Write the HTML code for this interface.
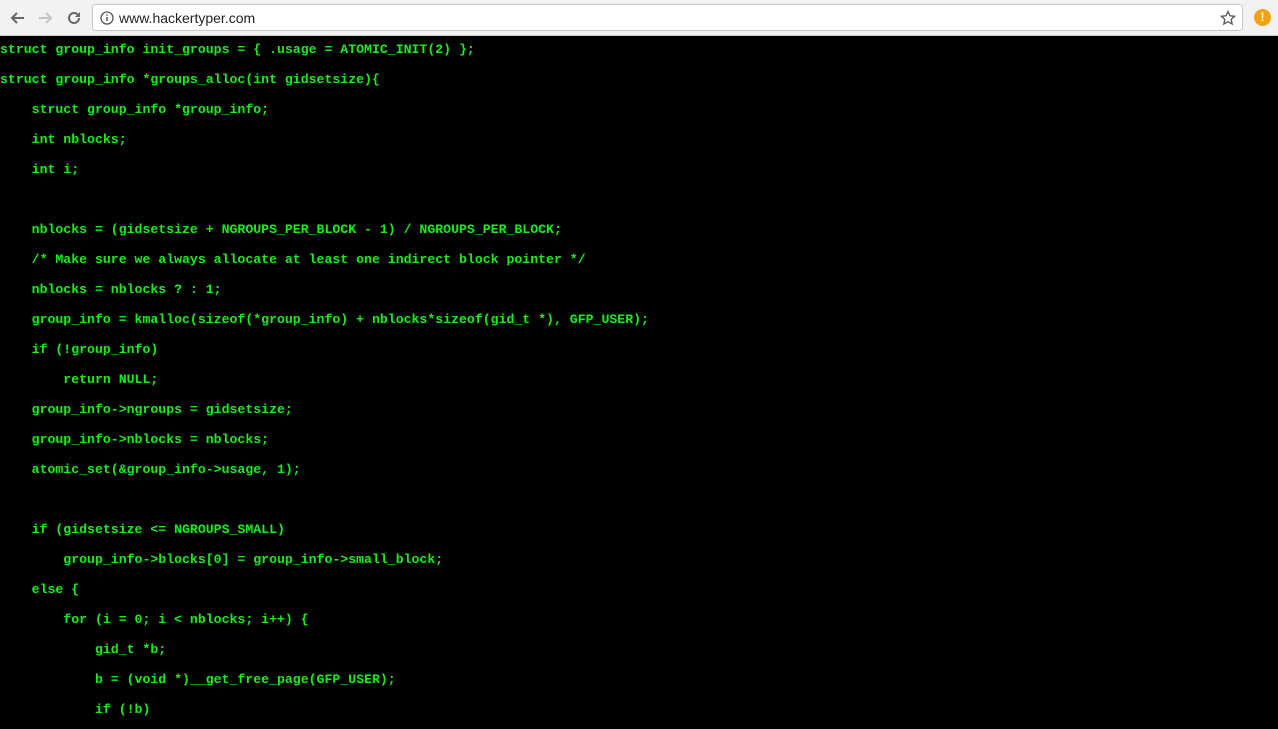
<!DOCTYPE html>
<html><head><style>
body{margin:0;width:1278px;height:729px;overflow:hidden;background:#000;font-family:"Liberation Sans",sans-serif}
.bar{position:absolute;left:0;top:0;width:1278px;height:36px;background:#f2f2f2;border-bottom:1px solid #cfcfcf;box-sizing:border-box}
.url{position:absolute;left:92px;top:4px;width:1151px;height:27px;background:#fff;border:1px solid #c8c8c8;border-radius:3px;box-sizing:border-box}
.url span{position:absolute;left:26px;top:5px;font-size:14px;color:#222}
pre{position:absolute;left:0;top:35px;margin:0;color:#14f014;font-family:"Liberation Mono",monospace;font-weight:bold;font-size:13.2px;line-height:30px;padding-top:0}
</style></head><body>
<div class="bar">
<svg style="position:absolute;left:9px;top:10px" width="16" height="16" viewBox="0 0 16 16"><path d="M15 8H3M8 3L3 8l5 5" stroke="#666" stroke-width="2" fill="none"/></svg>
<svg style="position:absolute;left:38px;top:10px" width="16" height="16" viewBox="0 0 16 16"><path d="M1 8h12M8 3l5 5-5 5" stroke="#c4c4c4" stroke-width="2" fill="none"/></svg>
<svg style="position:absolute;left:66px;top:10px" width="16" height="16" viewBox="0 0 16 16"><path d="M13 8a5 5 0 1 1-1.5-3.6" stroke="#666" stroke-width="2" fill="none"/><path d="M14 2v5h-5z" fill="#666"/></svg>
<div class="url"><svg style="position:absolute;left:7px;top:6px" width="14" height="14" viewBox="0 0 14 14"><circle cx="7" cy="7" r="6" stroke="#555" stroke-width="1.3" fill="none"/><path d="M7 6v4M7 3.5v1.3" stroke="#555" stroke-width="1.5"/></svg><span>www.hackertyper.com</span>
<svg style="position:absolute;right:6px;top:5px" width="16" height="16" viewBox="0 0 16 16"><path d="M8 1.5l2 4.3 4.6.5-3.4 3.1 1 4.6L8 11.7 3.8 14l1-4.6L1.4 6.3 6 5.8z" stroke="#555" stroke-width="1.3" fill="none"/></svg></div>
<div style="position:absolute;left:1254px;top:9px;width:17px;height:17px;border-radius:50%;background:#f2a20c;color:#fff;font-weight:bold;font-size:12px;text-align:center;line-height:17px">!</div>
</div>
<pre>struct group_info init_groups = { .usage = ATOMIC_INIT(2) };
struct group_info *groups_alloc(int gidsetsize){
    struct group_info *group_info;
    int nblocks;
    int i;

    nblocks = (gidsetsize + NGROUPS_PER_BLOCK - 1) / NGROUPS_PER_BLOCK;
    /* Make sure we always allocate at least one indirect block pointer */
    nblocks = nblocks ? : 1;
    group_info = kmalloc(sizeof(*group_info) + nblocks*sizeof(gid_t *), GFP_USER);
    if (!group_info)
        return NULL;
    group_info-&gt;ngroups = gidsetsize;
    group_info-&gt;nblocks = nblocks;
    atomic_set(&amp;group_info-&gt;usage, 1);

    if (gidsetsize &lt;= NGROUPS_SMALL)
        group_info-&gt;blocks[0] = group_info-&gt;small_block;
    else {
        for (i = 0; i &lt; nblocks; i++) {
            gid_t *b;
            b = (void *)__get_free_page(GFP_USER);
            if (!b)
</pre>
</body></html>
